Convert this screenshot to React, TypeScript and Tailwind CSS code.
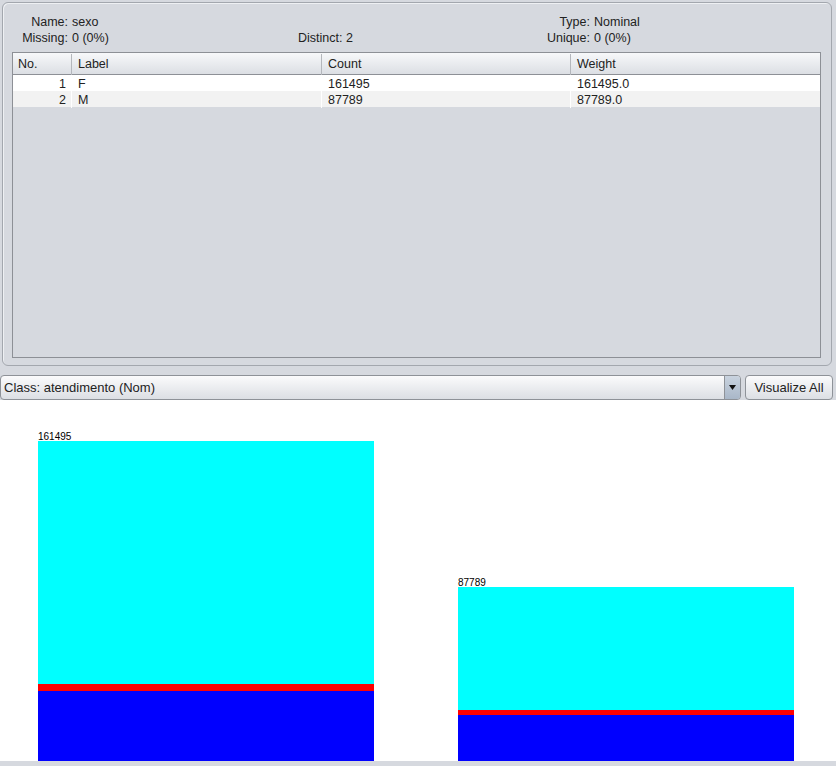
const rows = [
  {no: 1, label: 'F', count: '161495', weight: '161495.0'},
  {no: 2, label: 'M', count: '87789', weight: '87789.0'},
];

const bars = [
  {label: '161495', cyan: 243, red: 7, blue: 70},
  {label: '87789', cyan: 123, red: 5, blue: 46},
];

const App = () => {
  return (
    <div className="flex h-[766px] w-[836px] flex-col bg-[#d6d9df] font-['Liberation_Sans',Arial,sans-serif] text-[12.5px] text-[#222]">
      {/* attribute panel */}
      <div className="h-[375px] pt-[2px] pr-[4px] pl-[2px]">
        <div className="flex h-[364px] flex-col rounded-[6px] border border-[#a3a7ae] pt-[11px] pr-[10px] pl-[9px] shadow-[inset_1px_1px_0_#eef0f3]">
          <div className="flex leading-[16px]">
            <div className="grid w-[286px] grid-cols-[56px_1fr] gap-x-[4px]">
              <span className="text-right">Name:</span>
              <span>sexo</span>
              <span className="text-right">Missing:</span>
              <span>0 (0%)</span>
            </div>
            <div className="w-[200px] pt-[16px]">Distinct: 2</div>
            <div className="grid grid-cols-[92px_1fr] gap-x-[4px]">
              <span className="text-right">Type:</span>
              <span>Nominal</span>
              <span className="text-right">Unique:</span>
              <span>0 (0%)</span>
            </div>
          </div>

          <div className="mt-[6px] h-[306px] border border-[#8d9096] bg-[#d6d9df]">
            <div className="grid h-[22px] grid-cols-[59px_250px_249px_1fr] border-b border-[#8d9096] bg-gradient-to-b from-[#f7f8fa] to-[#dcdfe4] pt-[1px] leading-[21px]">
              <div className="border-r border-[#b4b7bc] pl-[5px]">No.</div>
              <div className="border-r border-[#b4b7bc] pl-[6px]">Label</div>
              <div className="border-r border-[#b4b7bc] pl-[6px]">Count</div>
              <div className="pl-[6px]">Weight</div>
            </div>
            {rows.map(row => (
              <div
                key={row.no}
                className={`grid h-[16px] grid-cols-[59px_250px_249px_1fr] pt-[1px] leading-[16px] ${row.no % 2 === 1 ? 'bg-white' : 'bg-[#f2f2f2]'}`}
              >
                <div className="border-r border-white pr-[5px] text-right">{row.no}</div>
                <div className="border-r border-white pl-[6px]">{row.label}</div>
                <div className="border-r border-white pl-[6px]">{row.count}</div>
                <div className="pl-[6px]">{row.weight}</div>
              </div>
            ))}
          </div>
        </div>
      </div>

      {/* class selector */}
      <div className="flex h-[25px] gap-[4px] pr-[3px]">
        <div className="flex flex-1 items-stretch rounded-[4px] border border-[#8e9298] bg-gradient-to-b from-[#fbfbfc] to-[#dcdfe4]">
          <div className="flex-1 pl-[3px] text-[13px] leading-[23px]">Class: atendimento (Nom)</div>
          <div className="flex w-[16px] items-center justify-center rounded-r-[3px] border-l border-[#8e9298] bg-gradient-to-b from-[#c9d3df] to-[#a9b7c8]">
            <svg width="7" height="5" viewBox="0 0 7 5">
              <path d="M0 0 H7 L3.5 5 Z" fill="#111" />
            </svg>
          </div>
        </div>
        <button className="w-[88px] rounded-[4px] border border-[#8e9298] bg-gradient-to-b from-[#fbfbfc] to-[#dcdfe4] text-[13px] leading-[23px]">
          Visualize All
        </button>
      </div>

      {/* histogram */}
      <div className="flex h-[361px] items-end gap-[84px] bg-white pl-[38px]">
        {bars.map(bar => (
          <div key={bar.label} className="flex w-[336px] flex-col">
            <div className="text-[10px] leading-[9px] text-black">{bar.label}</div>
            <div className="bg-[#00ffff]" style={{height: bar.cyan}} />
            <div className="bg-[#ff0000]" style={{height: bar.red}} />
            <div className="bg-[#0000ff]" style={{height: bar.blue}} />
          </div>
        ))}
      </div>
      <div className="flex-1 bg-[#d6d9df]" />
    </div>
  );
};

export default App;
